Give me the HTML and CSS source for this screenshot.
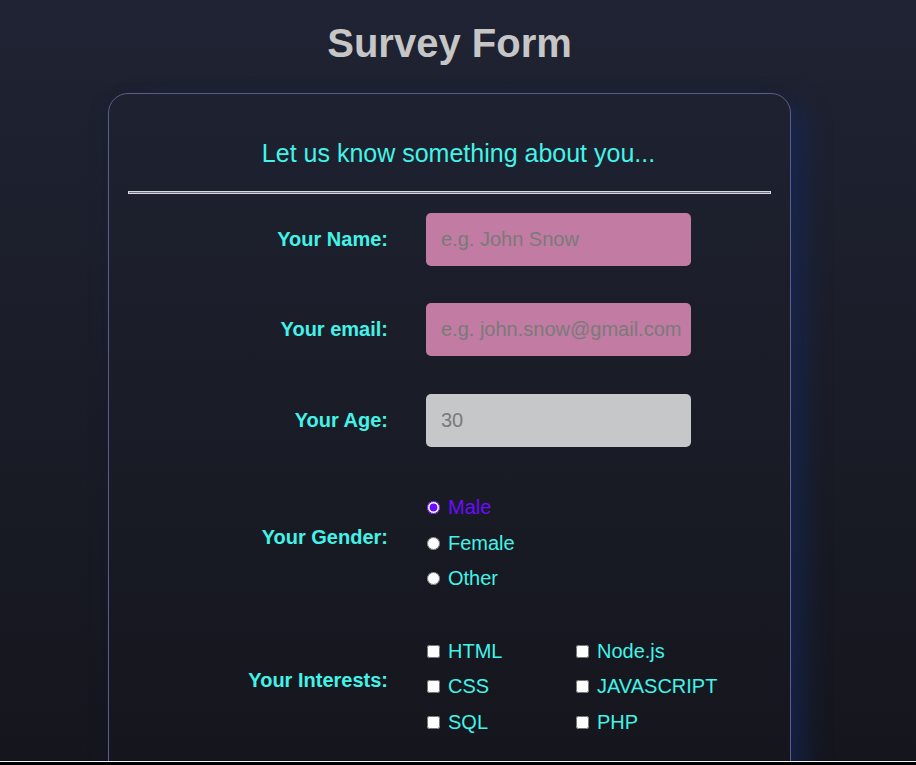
FILE: index.html
```html
<!DOCTYPE html>
<html lang="en">
<head>
<meta charset="utf-8">
<title>Survey Form</title>
<link rel="stylesheet" href="styles.css">
</head>
<body>
<div class="page">
<h1 class="title">Survey Form</h1>
<form class="card">
  <p class="intro">Let us know something about you...</p>
  <hr class="rule">
  <div class="rows">
    <div class="row">
      <label class="label" for="name">Your Name:</label>
      <input class="field pink" id="name" type="text" placeholder="e.g. John Snow">
    </div>
    <div class="row">
      <label class="label" for="email">Your email:</label>
      <input class="field pink" id="email" type="email" placeholder="e.g. john.snow@gmail.com">
    </div>
    <div class="row row-age">
      <label class="label" for="age">Your Age:</label>
      <input class="field grey" id="age" type="number" placeholder="30">
    </div>
    <div class="row row-gender">
      <span class="label raised">Your Gender:</span>
      <div class="options">
        <label class="option selected"><input type="radio" name="gender" checked>Male</label>
        <label class="option"><input type="radio" name="gender">Female</label>
        <label class="option"><input type="radio" name="gender">Other</label>
      </div>
    </div>
    <div class="row">
      <span class="label raised">Your Interests:</span>
      <div class="options grid">
        <label class="option"><input type="checkbox">HTML</label>
        <label class="option"><input type="checkbox">Node.js</label>
        <label class="option"><input type="checkbox">CSS</label>
        <label class="option"><input type="checkbox">JAVASCRIPT</label>
        <label class="option"><input type="checkbox">SQL</label>
        <label class="option"><input type="checkbox">PHP</label>
      </div>
    </div>
  </div>
</form>
</div>
<div class="bottom-bar"></div>
</body>
</html>
```

FILE: styles.css
```css
html {
  background: #14151c;
}
body {
  margin: 0;
  min-height: 765px;
  background: linear-gradient(180deg, #1f2333 0%, #1a1c27 50%, #14151c 100%);
  font-family: "Liberation Sans", Arial, sans-serif;
  padding-top: 20px;
  box-sizing: border-box;
}
.page {
  width: 899px;
}
.title {
  margin: 0;
  text-align: center;
  font-size: 40px;
  line-height: 46px;
  font-weight: bold;
  color: #c6c6c6;
}
.card {
  width: 683px;
  box-sizing: border-box;
  margin: 27px auto 0;
  border: 1px solid #5d5d8c;
  border-radius: 20px;
  padding: 40px 19px 60px;
  box-shadow: 18px 8px 24px -4px rgba(22, 42, 95, 0.6), -4px 6px 20px -4px rgba(20, 38, 85, 0.25);
}
.intro {
  margin: 0;
  padding-left: 18px;
  text-align: center;
  color: #43f3e8;
  font-size: 25px;
  line-height: 38px;
}
.rule {
  margin: 19px 0 0;
  height: 1px;
  border: 1px solid #d8d8de;
  background: #6f6f80;
}
.rows {
  display: flex;
  flex-direction: column;
  gap: 37px;
  margin-top: 19px;
}
.row {
  display: grid;
  grid-template-columns: 260px 265px;
  column-gap: 38px;
  align-items: center;
}
.row-age {
  margin-top: 1px;
}
.row-gender {
  margin-top: 6px;
}
.label {
  text-align: right;
  color: #43f3e8;
  font-weight: bold;
  font-size: 20px;
}
.label.raised {
  position: relative;
  top: -6px;
}
.field {
  width: 265px;
  height: 53px;
  box-sizing: border-box;
  border: none;
  border-radius: 5px;
  padding: 0 4px 0 15px;
  font-family: "Liberation Sans", Arial, sans-serif;
  font-size: 20px;
  color: #333;
  outline: none;
}
.field::placeholder {
  color: #7a7a7a;
}
.pink {
  background: #c27ba2;
}
.grey {
  background: #c6c7c8;
}
.options {
  display: flex;
  flex-direction: column;
}
.options.grid {
  display: grid;
  grid-template-columns: 149px 150px;
}
.option {
  display: flex;
  align-items: center;
  height: 35.5px;
  color: #43f3e8;
  font-size: 20px;
  white-space: nowrap;
}
.option input {
  width: 13px;
  height: 13px;
  margin: 0 8px 0 1px;
  accent-color: #6a0dff;
}
.option.selected {
  color: #6a0dff;
}
.bottom-bar {
  position: fixed;
  left: 0;
  right: 0;
  bottom: 0;
  height: 3px;
  border-top: 1px solid #f2f2f2;
  background: #000;
}
```
